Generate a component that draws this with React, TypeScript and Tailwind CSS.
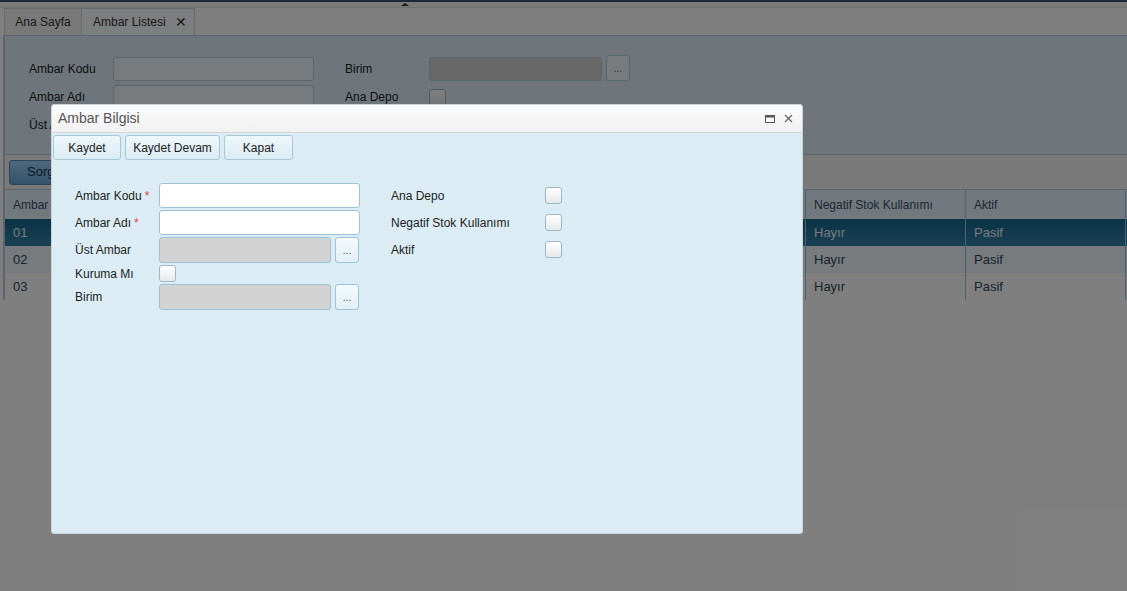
import React from 'react';

const cols = [
  { title: 'Ambar Kodu', w: 'w-[111px]' },
  { title: 'Ambar Adı', w: 'w-[150px]' },
  { title: 'Üst Ambar', w: 'w-[140px]' },
  { title: 'Kuruma Mı', w: 'w-[130px]' },
  { title: 'Birim', w: 'w-[130px]' },
  { title: 'Ana Depo', w: 'w-[140px]' },
  { title: 'Negatif Stok Kullanımı', w: 'w-[160px]' },
  { title: 'Aktif', w: 'w-[160px]' },
];

const rows = [
  ['01', 'Merkez Depo', '', 'Hayır', 'Adet', 'Evet', 'Hayır', 'Pasif'],
  ['02', 'Yedek Depo', '', 'Hayır', 'Adet', 'Hayır', 'Hayır', 'Pasif'],
  ['03', 'Şube Depo', '', 'Hayır', 'Adet', 'Hayır', 'Hayır', 'Pasif'],
];

function Checkbox() {
  return (
    <div className="h-[17px] w-[17px] shrink-0 rounded-[3px] border border-[#9fb6c4] bg-gradient-to-b from-white to-[#e6e9ec]" />
  );
}

function DotsButton({ dark }: { dark?: boolean }) {
  return (
    <button
      className={
        'flex h-[26px] w-[24px] items-start justify-center rounded-[3px] border pt-[8px] text-[10px] leading-none ' +
        (dark
          ? 'border-[#b4cad8] bg-[#eef6fb] text-[#555]'
          : 'border-[#9cc3d6] bg-gradient-to-b from-[#f4fafd] to-[#e2eff6] text-[#444]')
      }
    >
      ...
    </button>
  );
}

function DialogButton({ children, w }: { children: React.ReactNode; w: string }) {
  return (
    <button
      className={
        'h-[25px] rounded-[3px] border border-[#a6c8d8] bg-gradient-to-b from-[#eef7fb] to-[#dbebf3] text-[12px] text-[#222] ' +
        w
      }
    >
      {children}
    </button>
  );
}

function Label({ text, req, w = 'w-[84px]' }: { text: string; req?: boolean; w?: string }) {
  return (
    <div className={'flex shrink-0 items-center ' + w}>
      <span>{text}</span>
      {req && <span className="ml-[3px] text-[#e23c3c]">*</span>}
    </div>
  );
}

export default function App() {
  return (
    <div className="relative h-[591px] w-[1127px] overflow-hidden bg-white font-['Liberation_Sans',Arial,sans-serif] text-[12px] text-[#222]">
      {/* top strip + splitter */}
      <div className="h-[2px] bg-[#35536e]" />
      <div className="relative h-[6px] border-b border-[#e0e0e0] bg-[#f4f4f4]">
        <div className="absolute left-[401px] top-[1px] h-0 w-0 border-x-[4px] border-b-[3px] border-x-transparent border-b-[#333]" />
      </div>

      {/* tabs */}
      <div className="flex h-[27px] items-end bg-white pl-[4px]">
        <div className="flex h-[27px] w-[78px] items-center justify-center border border-b-0 border-[#d0d0d0] bg-[#f2f2f2] text-[#333]">
          Ana Sayfa
        </div>
        <div className="flex h-[27px] w-[113px] items-center border border-b-0 border-l-0 border-[#d0d0d0] bg-[#fafcfe] pl-[11px] text-[#333]">
          Ambar Listesi
          <span className="ml-[9px] text-[14px] font-light leading-none text-[#333]">✕</span>
        </div>
      </div>

      {/* main panel */}
      <div className="ml-[3px] border-l-2 border-t border-[#b4cae0] bg-[#dcecf8]">
        <div className="flex gap-[31px] pl-[24px] pt-[21px] pb-[17px]">
          <div className="flex flex-col gap-[4px]">
            <div className="flex h-[24px] items-center">
              <Label text="Ambar Kodu" />
              <div className="h-[24px] w-[201px] rounded-[3px] border border-[#b4cad8] bg-[#eef6fb]" />
            </div>
            <div className="flex h-[24px] items-center">
              <Label text="Ambar Adı" />
              <div className="h-[24px] w-[201px] rounded-[3px] border border-[#b4cad8] bg-[#eef6fb]" />
            </div>
            <div className="flex h-[24px] items-center">
              <Label text="Üst Ambar" />
              <div className="h-[24px] w-[172px] rounded-[3px] border border-[#b4cad8] bg-[#d0d0d0]" />
            </div>
          </div>
          <div className="flex flex-col gap-[4px]">
            <div className="flex h-[24px] items-center">
              <Label text="Birim" />
              <div className="h-[24px] w-[173px] rounded-[3px] border border-[#b4cad8] bg-[#d0d0d0]" />
              <div className="-mt-[2px] ml-[4px]">
                <DotsButton dark />
              </div>
            </div>
            <div className="flex h-[24px] items-center">
              <Label text="Ana Depo" />
              <Checkbox />
            </div>
          </div>
        </div>

        {/* toolbar */}
        <div className="flex h-[35px] items-center border-t border-[#b4cce0] bg-[#f2f2f2] pl-[4px]">
          <button className="h-[25px] w-[80px] rounded-[3px] border border-[#5a8cb8] bg-gradient-to-b from-[#9ed2f8] to-[#68a4d4] pl-[17px] text-left text-[13px] text-[#1c3850]">
            Sorgula
          </button>
        </div>

        {/* grid */}
        <div className="border-t border-[#b4cce0] bg-white">
          <div className="flex h-[29px] bg-[#e4f2fc] text-[#3c5064]">
            {cols.map((c) => (
              <div key={c.title} className={'flex items-center border-r border-[#96c4e6] pl-[8px] ' + c.w}>
                {c.title}
              </div>
            ))}
          </div>
          {rows.map((r, i) => (
            <div
              key={i}
              className={
                'flex h-[27px] ' +
                (i === 0
                  ? 'bg-gradient-to-b from-[#14668c] to-[#3482a8] text-[#eef4f8]'
                  : i === 1
                    ? 'bg-[#eef6fc] text-[#32465a]'
                    : 'bg-white text-[#32465a]')
              }
            >
              {r.map((v, j) => (
                <div key={j} className={'flex items-center border-r border-[#96c4e6] pl-[8px] text-[13px] ' + cols[j].w}>
                  {v}
                </div>
              ))}
            </div>
          ))}
        </div>
      </div>

      {/* modal mask */}
      <div className="absolute inset-0 bg-black/50" />

      {/* dialog */}
      <div className="absolute left-[51px] top-[104px] flex h-[430px] w-[752px] flex-col overflow-hidden rounded-[3px] border border-[#c9d3d9] bg-[#dbecf4]">
        <div className="flex h-[28px] shrink-0 items-center justify-between border-b border-[#d6d6d6] bg-gradient-to-b from-[#fbfbfb] to-[#f1f1f1] pl-[6px] pr-[9px]">
          <span className="text-[14px] text-[#555]">Ambar Bilgisi</span>
          <div className="flex items-center gap-[9px]">
            <svg width="10" height="8" viewBox="0 0 10 8">
              <rect x="0.5" y="0.5" width="9" height="7" fill="none" stroke="#555" />
              <rect x="0.5" y="0.5" width="9" height="2" fill="#555" />
            </svg>
            <svg width="9" height="9" viewBox="0 0 9 9">
              <path d="M1 1 L8 8 M8 1 L1 8" stroke="#666" strokeWidth="1.2" />
            </svg>
          </div>
        </div>

        <div className="flex gap-[4px] pl-[1px] pt-[2px]">
          <DialogButton w="w-[68px]">Kaydet</DialogButton>
          <DialogButton w="w-[95px]">Kaydet Devam</DialogButton>
          <DialogButton w="w-[69px]">Kapat</DialogButton>
        </div>

        <div className="flex gap-[31px] pl-[23px] pt-[23px]">
          <div className="flex flex-col gap-[2px]">
            <div className="flex h-[25px] items-center">
              <Label text="Ambar Kodu" req />
              <div className="h-[25px] w-[201px] rounded-[3px] border border-[#9cc3d6] bg-white" />
            </div>
            <div className="flex h-[25px] items-center">
              <Label text="Ambar Adı" req />
              <div className="h-[25px] w-[201px] rounded-[3px] border border-[#9cc3d6] bg-white" />
            </div>
            <div className="flex h-[26px] items-center">
              <Label text="Üst Ambar" />
              <div className="h-[26px] w-[172px] rounded-[3px] border border-[#9cc3d6] bg-[#d3d3d3]" />
              <div className="ml-[4px]">
                <DotsButton />
              </div>
            </div>
            <div className="flex h-[17px] items-center">
              <Label text="Kuruma Mı" />
              <Checkbox />
            </div>
            <div className="flex h-[26px] items-center">
              <Label text="Birim" />
              <div className="h-[26px] w-[172px] rounded-[3px] border border-[#9cc3d6] bg-[#d3d3d3]" />
              <div className="ml-[4px]">
                <DotsButton />
              </div>
            </div>
          </div>

          <div className="flex flex-col gap-[2px]">
            <div className="flex h-[25px] items-center">
              <Label text="Ana Depo" w="w-[154px]" />
              <Checkbox />
            </div>
            <div className="flex h-[25px] items-center">
              <Label text="Negatif Stok Kullanımı" w="w-[154px]" />
              <Checkbox />
            </div>
            <div className="flex h-[25px] items-center">
              <Label text="Aktif" w="w-[154px]" />
              <Checkbox />
            </div>
          </div>
        </div>
      </div>
    </div>
  );
}
